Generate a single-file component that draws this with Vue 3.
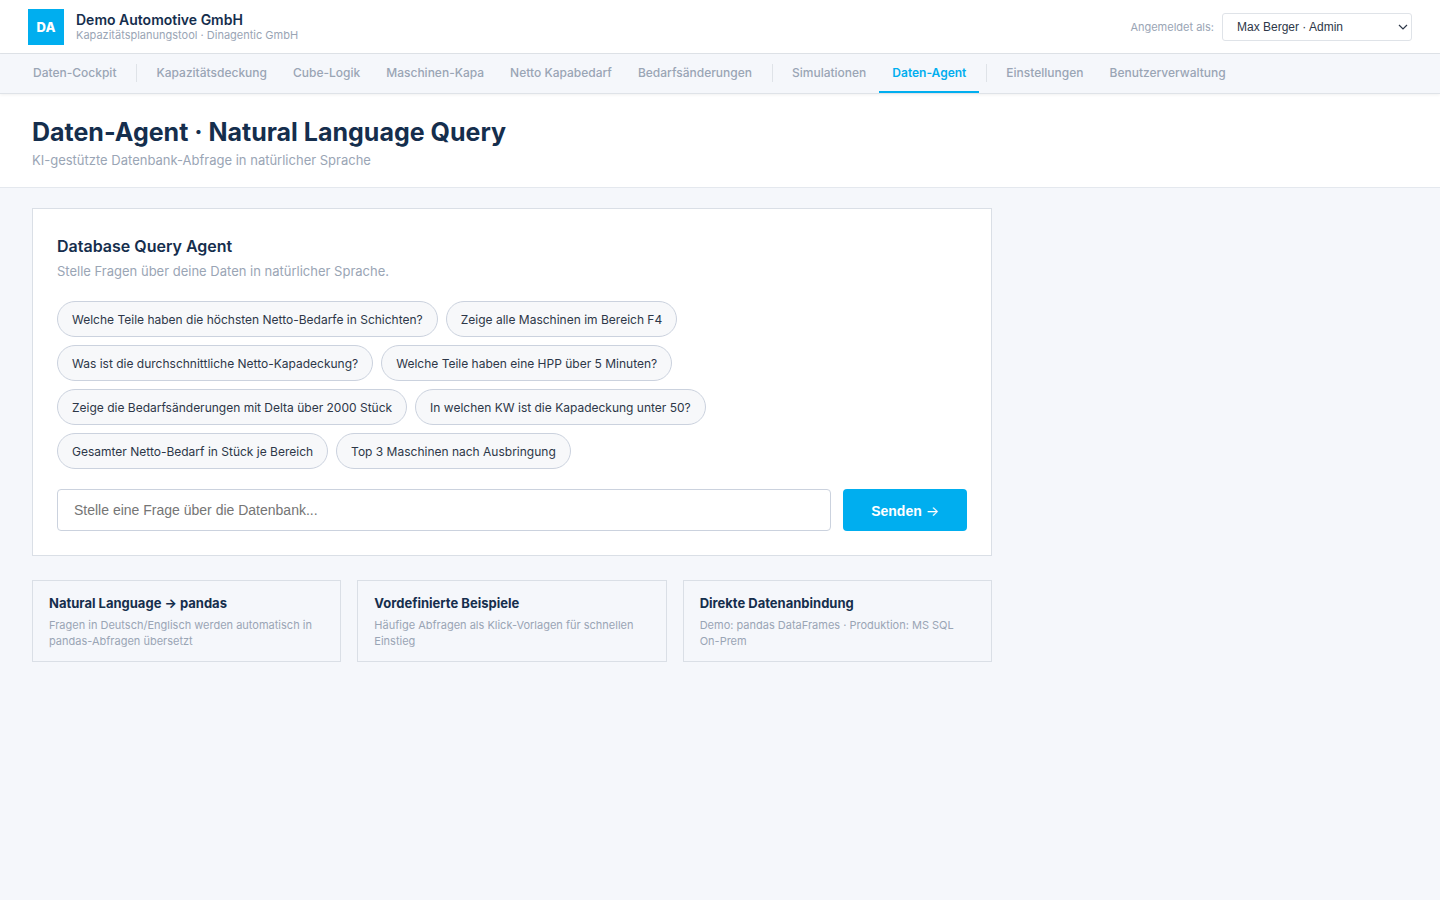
<script setup>
const nav = [
  ['Daten-Cockpit'],
  ['Kapazitätsdeckung', 'Cube-Logik', 'Maschinen-Kapa', 'Netto Kapabedarf', 'Bedarfsänderungen'],
  ['Simulationen', 'Daten-Agent'],
  ['Einstellungen', 'Benutzerverwaltung'],
]
const active = 'Daten-Agent'
const examples = [
  'Welche Teile haben die höchsten Netto-Bedarfe in Schichten?',
  'Zeige alle Maschinen im Bereich F4',
  'Was ist die durchschnittliche Netto-Kapadeckung?',
  'Welche Teile haben eine HPP über 5 Minuten?',
  'Zeige die Bedarfsänderungen mit Delta über 2000 Stück',
  'In welchen KW ist die Kapadeckung unter 50?',
  'Gesamter Netto-Bedarf in Stück je Bereich',
  'Top 3 Maschinen nach Ausbringung',
]
const infos = [
  { title: 'Natural Language → pandas', text: 'Fragen in Deutsch/Englisch werden automatisch in pandas-Abfragen übersetzt' },
  { title: 'Vordefinierte Beispiele', text: 'Häufige Abfragen als Klick-Vorlagen für schnellen Einstieg' },
  { title: 'Direkte Datenanbindung', text: 'Demo: pandas DataFrames · Produktion: MS SQL On-Prem' },
]
</script>

<template>
  <header class="topbar">
    <div class="logo">DA</div>
    <div class="brand">
      <div class="company">Demo Automotive GmbH</div>
      <div class="tool">Kapazitätsplanungstool · Dinagentic GmbH</div>
    </div>
    <div class="user">
      <label for="user">Angemeldet als:</label>
      <div class="select-wrap">
        <select id="user"><option>Max Berger · Admin</option></select>
        <svg viewBox="0 0 10 6" aria-hidden="true"><path d="M1 1l4 4 4-4" /></svg>
      </div>
    </div>
  </header>
  <nav class="nav">
    <div v-for="(group, i) in nav" :key="i" class="group">
      <a v-for="item in group" :key="item" href="#" :class="{ active: item === active }">{{ item }}</a>
    </div>
  </nav>
  <section class="heading">
    <h1>Daten-Agent · Natural Language Query</h1>
    <p>KI-gestützte Datenbank-Abfrage in natürlicher Sprache</p>
  </section>
  <main class="content">
    <section class="agent">
      <h2>Database Query Agent</h2>
      <p>Stelle Fragen über deine Daten in natürlicher Sprache.</p>
      <div class="chips">
        <button v-for="e in examples" :key="e" type="button">{{ e }}</button>
      </div>
      <form class="ask" @submit.prevent>
        <input type="text" aria-label="Frage" placeholder="Stelle eine Frage über die Datenbank..." />
        <button type="submit">Senden <span class="arrow">→</span></button>
      </form>
    </section>
    <div class="infos">
      <article v-for="info in infos" :key="info.title">
        <h3>{{ info.title }}</h3>
        <p>{{ info.text }}</p>
      </article>
    </div>
  </main>
</template>

<style>
body {
  background: #f5f7fb;
}
</style>

<style scoped>
* {
  box-sizing: border-box;
}
.topbar, .nav, .heading, .content {
  font-family: Inter, sans-serif;
  color: #152e4d;
}
h1, h2, h3, p {
  margin: 0;
}
.topbar {
  display: flex;
  align-items: center;
  gap: 12px;
  height: 54px;
  padding: 0 28px;
  background: #fff;
  border-bottom: 1px solid #dfe3e8;
}
.logo {
  display: grid;
  place-items: center;
  width: 36px;
  height: 36px;
  background: #00aeef;
  color: #fff;
  font-size: 13px;
  font-weight: 800;
}
.company {
  font-size: 14px;
  line-height: 18px;
  font-weight: 600;
}
.tool {
  font-size: 11px;
  line-height: 12px;
  padding-bottom: 2px;
  color: #9aa5b5;
}
.user {
  display: flex;
  align-items: center;
  gap: 8px;
  margin-left: auto;
  font-size: 11px;
  color: #9aa5b5;
}
.select-wrap {
  position: relative;
}
select {
  appearance: none;
  display: block;
  width: 190px;
  height: 28px;
  padding: 0 14px;
  border: 1px solid #dfe3e8;
  border-radius: 3px;
  background: #fff;
  color: #2d3748;
  font: 12px "Liberation Sans", sans-serif;
}
.select-wrap svg {
  position: absolute;
  right: 4px;
  top: 11px;
  width: 10px;
  height: 6px;
  fill: none;
  stroke: #2d3748;
  stroke-width: 1.2;
  pointer-events: none;
}
.nav {
  position: relative;
  display: flex;
  height: 40px;
  padding: 0 20px;
  background: #f5f7fb;
  border-bottom: 1px solid #dfe3e8;
  box-shadow: 0 1px 3px rgba(0, 0, 0, 0.06);
}
.group {
  display: flex;
}
.group + .group::before {
  content: "";
  width: 1px;
  height: 18px;
  margin: 10px 6px 10px 7px;
  background: #dfe3e8;
}
.group a {
  padding: 0 13px;
  border-bottom: 2px solid transparent;
  color: #9aa5b5;
  font-size: 12px;
  line-height: 38px;
  font-weight: 500;
  text-decoration: none;
  white-space: nowrap;
}
.group a.active {
  color: #00aeef;
  border-color: #00aeef;
  font-weight: 600;
}
.heading {
  padding: 22px 32px 19px;
  background: #fff;
  border-bottom: 1px solid #e4e8ee;
}
h1 {
  font-size: 25px;
  line-height: 32px;
  font-weight: 700;
}
.heading p {
  margin-top: 4px;
  font-size: 13px;
  line-height: 16px;
  color: #9aa5b5;
}
.content {
  max-width: 1024px;
  padding: 20px 32px;
}
.agent {
  padding: 24px;
  background: #fff;
  border: 1px solid #dadfe6;
}
h2 {
  font-size: 16px;
  line-height: 26px;
  font-weight: 600;
}
.agent p {
  margin-top: 2px;
  font-size: 13px;
  line-height: 20px;
  color: #9aa5b5;
}
.chips {
  display: flex;
  flex-wrap: wrap;
  gap: 8px;
  max-width: 680px;
  margin: 20px 0;
}
.chips button {
  height: 36px;
  padding: 0 14px;
  border: 1px solid #cbd2de;
  border-radius: 18px;
  background: #f7f8fa;
  color: #2d3748;
  font: 12px Inter, sans-serif;
}
.ask {
  display: flex;
  gap: 12px;
}
.ask input {
  flex: 1;
  height: 42px;
  padding: 0 16px;
  border: 1px solid #cbd2de;
  border-radius: 4px;
  font: 14px "Liberation Sans", sans-serif;
}
.ask input::placeholder {
  color: #757575;
}
.ask button {
  padding: 0 28px;
  border: 0;
  border-radius: 4px;
  background: #00aeef;
  color: #fff;
  font: bold 14px "Liberation Sans", sans-serif;
}
.arrow {
  font-family: Inter, sans-serif;
  font-weight: 400;
}
.infos {
  display: grid;
  grid-template-columns: repeat(3, 1fr);
  gap: 16px;
  margin-top: 24px;
}
.infos article {
  padding: 12px 16px;
  border: 1px solid #dadfe6;
}
h3 {
  font-size: 13px;
  line-height: 21px;
  font-weight: 700;
}
.infos p {
  margin-top: 3px;
  font-size: 11px;
  line-height: 16px;
  color: #9aa5b5;
}
</style>
